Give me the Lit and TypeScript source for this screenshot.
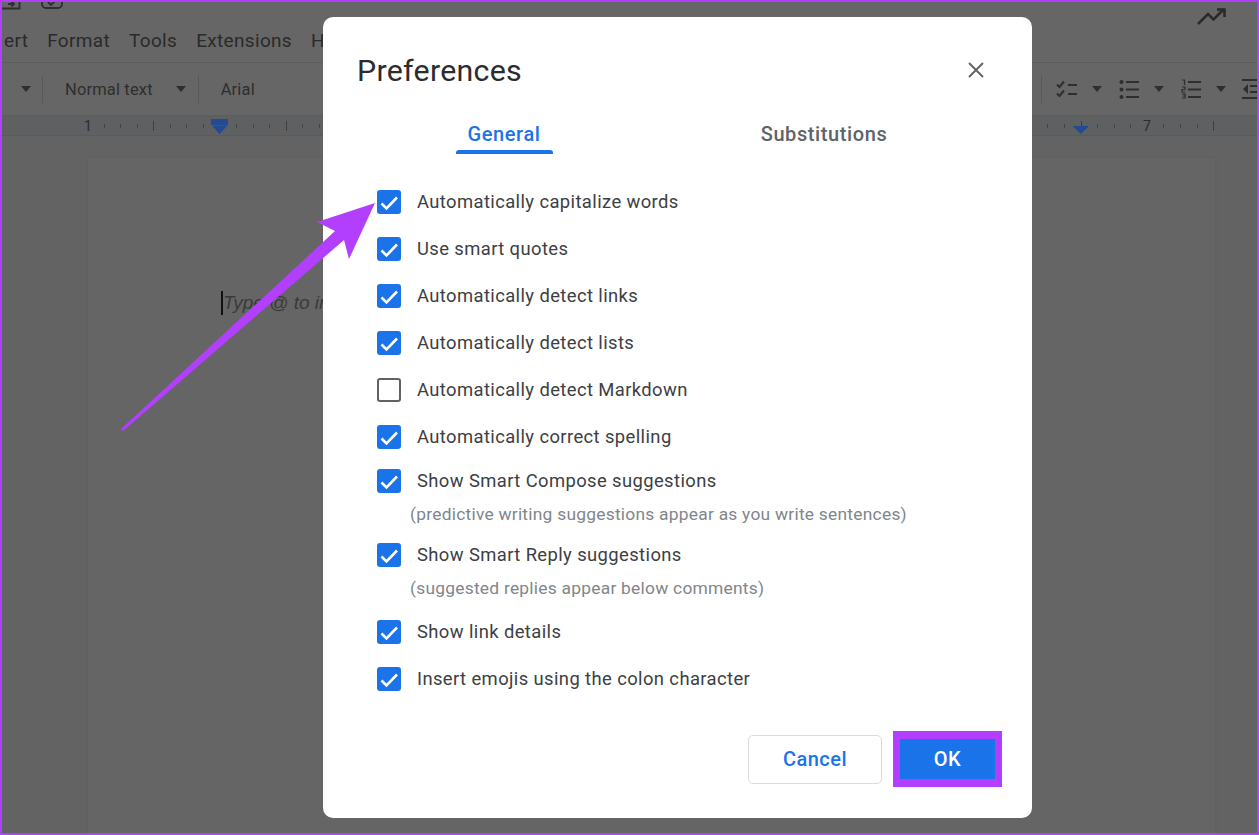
import { LitElement, html, css, svg } from "lit";
import { customElement } from "lit/decorators.js";

const rows: { label: string; checked: boolean; hint?: string; cls: string }[] = [
  { label: "Automatically capitalize words", checked: true, cls: "h47" },
  { label: "Use smart quotes", checked: true, cls: "h47" },
  { label: "Automatically detect links", checked: true, cls: "h47" },
  { label: "Automatically detect lists", checked: true, cls: "h47" },
  { label: "Automatically detect Markdown", checked: false, cls: "h47" },
  { label: "Automatically correct spelling", checked: true, cls: "h44" },
  { label: "Show Smart Compose suggestions", checked: true, hint: "(predictive writing suggestions appear as you write sentences)", cls: "h74" },
  { label: "Show Smart Reply suggestions", checked: true, hint: "(suggested replies appear below comments)", cls: "h77" },
  { label: "Show link details", checked: true, cls: "h47" },
  { label: "Insert emojis using the colon character", checked: true, cls: "h47" },
];

const caret = html`<svg class="caret" width="12" height="6" viewBox="0 0 12 6"><path d="M1 0h10L6 6z" fill="#2e2e2e"/></svg>`;

@customElement("app-root")
export class AppRoot extends LitElement {
  static styles = css`
    :host { display: block; width: 1259px; height: 835px; position: relative; overflow: hidden; font-family: Roboto, "Liberation Sans", sans-serif; background: #666; }
    .frame { position: absolute; inset: 0; border: 2px solid #b13ffd; pointer-events: none; z-index: 5; }
    .bg { height: 835px; display: flex; flex-direction: column; background: #666; color: #2c2c2c; overflow: hidden; }
    .title { height: 22px; flex: none; display: block; overflow: visible; }
    .menu { display: flex; gap: 19px; padding: 8px 0 0 4px; box-sizing: border-box; font-size: 19px; line-height: 22px; letter-spacing: .33px; border-bottom: 1px solid #5c5c5c; color: #2a2a2a; flex: none; height: 41px; }
    .tool { height: 53px; box-sizing: border-box; flex: none; display: grid; grid-template-columns: 1041px 218px; overflow: hidden; font-size: 16.5px; letter-spacing: .15px; color: #2e2e2e; border-bottom: 1px solid #5e5e5e; }
    .tleft { display: flex; align-items: center; padding-left: 20px; }
    .tright { display: flex; align-items: center; }
    .caret { flex: none; display: block; }
    .sep { width: 1px; height: 27px; background: #585858; flex: none; }
    .m10 { margin-left: 10px; } .m11 { margin-left: 11px; } .m22 { margin-left: 22px; } .m14 { margin-left: 14px; }
    .tb { width: 62px; flex: none; display: flex; align-items: center; gap: 13px; }
    .tb svg:first-child { flex: none; display: block; }
    .ruler { height: 20px; flex: none; display: block; background: #5f6061; border-bottom: 1px solid #5a5a5a; box-sizing: border-box; }
    .ruler text { font: 14px Roboto, sans-serif; fill: #2c2c2c; }
    .paper { flex: 1; padding: 22px 0 0 88px; background: #636363; }
    .sheet { width: 1127px; height: 680px; background: #656565; box-shadow: 0 0 2px #5e5e5e; box-sizing: border-box; padding: 133px 0 0 133px; }
    .type { display: inline-block; font: italic 19px/24px "Liberation Sans", sans-serif; color: #3a3a3a; border-left: 2px solid #111; white-space: nowrap; }
    .modal { position: absolute; left: 323px; top: 17px; width: 709px; height: 801px; background: #fff; border-radius: 10px; box-sizing: border-box; padding: 34px 35px 31px; display: flex; flex-direction: column; z-index: 1; }
    .head { display: flex; justify-content: space-between; align-items: center; height: 39px; flex: none; }
    h1 { margin: 0 0 0 -1px; font: 400 30.3px/39px Roboto, sans-serif; color: #2b2c2e; letter-spacing: .3px; }
    .close { margin: -2px 13px 0 0; display: block; }
    .tabs { display: grid; grid-template-columns: 320px 320px; margin: 31px 0 0 -14px; flex: none; }
    .tab { display: flex; flex-direction: column; align-items: center; font-size: 20px; font-weight: 500; letter-spacing: .6px; line-height: 26px; color: #5f6368; white-space: nowrap; }
    .tab.on { color: #1a73e8; }
    .bar { width: 97px; height: 4px; margin-top: 3px; background: #1a73e8; border-radius: 3px 3px 0 0; }
    .list { margin-top: 36px; display: flex; flex-direction: column; flex: none; }
    .row { display: flex; align-items: flex-start; }
    .h47 { height: 47px; } .h44 { height: 44px; } .h74 { height: 74px; } .h77 { height: 77px; }
    .cb { width: 24px; height: 24px; border-radius: 3px; background: #1a73e8; margin-left: 19px; flex: none; display: block; box-sizing: border-box; }
    .cb.off { background: #fff; border: 2px solid #5f6368; }
    .lbl { font-size: 18.4px; line-height: 24px; letter-spacing: .4px; color: #3c4043; margin-left: 16px; white-space: nowrap; }
    .hint { font-size: 17.4px; line-height: 24px; letter-spacing: .24px; color: #80868b; white-space: nowrap; margin: 9px 0 0 52px; }
    .foot { margin: auto -5px 0 0; display: flex; align-items: center; justify-content: flex-end; gap: 11px; flex: none; }
    .btn { box-sizing: border-box; display: flex; align-items: center; justify-content: center; font-size: 20px; letter-spacing: .45px; font-weight: 500; }
    .cancel { width: 134px; height: 49px; border: 1px solid #dadce0; border-radius: 5px; color: #1a73e8; background: #fff; }
    .ok { width: 109px; height: 56px; background: #1a73e8; color: #fff; border-style: solid; border-color: #b13ffd; border-width: 8px 7px; }
    .arrow { position: absolute; left: 0; top: 0; z-index: 3; pointer-events: none; }
  `;

  private ticks() {
    const out = [];
    for (let k = 1; k <= 67; k++) {
      const m = k % 8;
      if (m === 0 || m === 4) continue;
      out.push(svg`<rect x=${Math.round(87 + k * 16.56)} y="8" width="1" height="4" fill="#454545"/>`);
    }
    for (let k = 0; k <= 8; k++) {
      out.push(svg`<rect x=${Math.round(153 + k * 132.5)} y="5" width="1" height="10" fill="#3e3e3e"/>`);
    }
    return out;
  }

  render() {
    return html`
      <div class="bg">
        <svg class="title" width="1259" height="22" viewBox="0 0 1259 22">
          <path d="M2 8.500h17.500V-3M8 4h6M11.500 1.500L14 4l-2.500 2.500" fill="none" stroke="#2e2e2e" stroke-width="1.800"/>
          <path d="M42 -2v6a4 4 0 0 0 4 4h12a4 4 0 0 0 4-4V-2M48 2l3 3 5-5" fill="none" stroke="#2e2e2e" stroke-width="1.800"/>
          <path d="M1198 24l10-10 5.500 5.500L1224 9M1217 9.500h7.500V17" fill="none" stroke="#2a2a2a" stroke-width="2.600"/>
        </svg>
        <div class="menu">
          <span>ert</span><span>Format</span><span>Tools</span><span>Extensions</span><span>Help</span>
        </div>
        <div class="tool">
          <div class="tleft">
            ${caret}
            <i class="sep m10"></i>
            <span class="m22">Normal text</span>
            <span class="m22">${caret}</span>
            <i class="sep m11"></i>
            <span class="m22">Arial</span>
          </div>
          <div class="tright">
            <i class="sep"></i>
            <div class="tb m14">
              <svg width="22" height="20" viewBox="0 0 22 20"><path d="M1 5.500L3.500 8 8 2.500M1 14.500L3.500 17 8 11.500M12 6h9M12 15h9" fill="none" stroke="#2e2e2e" stroke-width="2"/></svg>
              ${caret}
            </div>
            <div class="tb">
              <svg width="22" height="20" viewBox="0 0 22 20"><circle cx="3.500" cy="3" r="2" fill="#2e2e2e"/><circle cx="3.500" cy="10.500" r="2" fill="#2e2e2e"/><circle cx="3.500" cy="18" r="2" fill="#2e2e2e"/><path d="M8 3h13M8 10.500h13M8 18h13" stroke="#2e2e2e" stroke-width="2.200"/></svg>
              ${caret}
            </div>
            <div class="tb">
              <svg width="22" height="20" viewBox="0 0 22 20"><path d="M2 1h2.500v5M2 8h3v2.500H2V13h3M2 15h3v2H3M5 17v2H2" fill="none" stroke="#2e2e2e" stroke-width="1.200"/><path d="M8 3h13M8 10.500h13M8 18h13" stroke="#2e2e2e" stroke-width="2.200"/></svg>
              ${caret}
            </div>
            <div class="tb">
              <svg width="22" height="22" viewBox="0 0 22 22"><path d="M0 2h17M0 20h17M8 8h9M8 14h9" stroke="#2e2e2e" stroke-width="2.200"/><path d="M6 6v10l-5-5z" fill="#2e2e2e"/></svg>
            </div>
          </div>
        </div>
        <svg class="ruler" width="1259" height="19" viewBox="0 0 1259 19">
          ${this.ticks()}
          <text x="84" y="15">1</text>
          <text x="1143" y="15">7</text>
          <path d="M211 3h17v6h-17zM212 9.500h15.500L219.500 18z" fill="#234b93"/>
          <path d="M1072.500 10h16.500l-8.250 8z" fill="#234b93"/>
        </svg>
        <div class="paper">
          <div class="sheet"><div class="type">Type @ to insert</div></div>
        </div>
      </div>

      <div class="modal">
        <div class="head">
          <h1>Preferences</h1>
          <svg class="close" width="16" height="16" viewBox="0 0 16 16"><path d="M1 1l14 14M15 1L1 15" stroke="#5f6368" stroke-width="1.900"/></svg>
        </div>
        <div class="tabs">
          <div class="tab on"><span>General</span><div class="bar"></div></div>
          <div class="tab"><span>Substitutions</span></div>
        </div>
        <div class="list">
          ${rows.map(r => html`
            <div class=${r.cls}>
              <div class="row">
                ${r.checked
                  ? html`<svg class="cb" viewBox="0 0 24 24"><path d="M4.500 13.500l5 5L20 7.500" fill="none" stroke="#fff" stroke-width="2.600"/></svg>`
                  : html`<span class="cb off"></span>`}
                <span class="lbl">${r.label}</span>
              </div>
              ${r.hint ? html`<div class="hint">${r.hint}</div>` : ""}
            </div>`)}
        </div>
        <div class="foot">
          <div class="btn cancel">Cancel</div>
          <div class="btn ok">OK</div>
        </div>
      </div>

      <svg class="arrow" width="1259" height="835" viewBox="0 0 1259 835">
        <polygon points="121,429 123,431 344,240 349,259 375,203 317,222 335,231" fill="#b13ffd"/>
      </svg>
      <div class="frame"></div>
    `;
  }
}
